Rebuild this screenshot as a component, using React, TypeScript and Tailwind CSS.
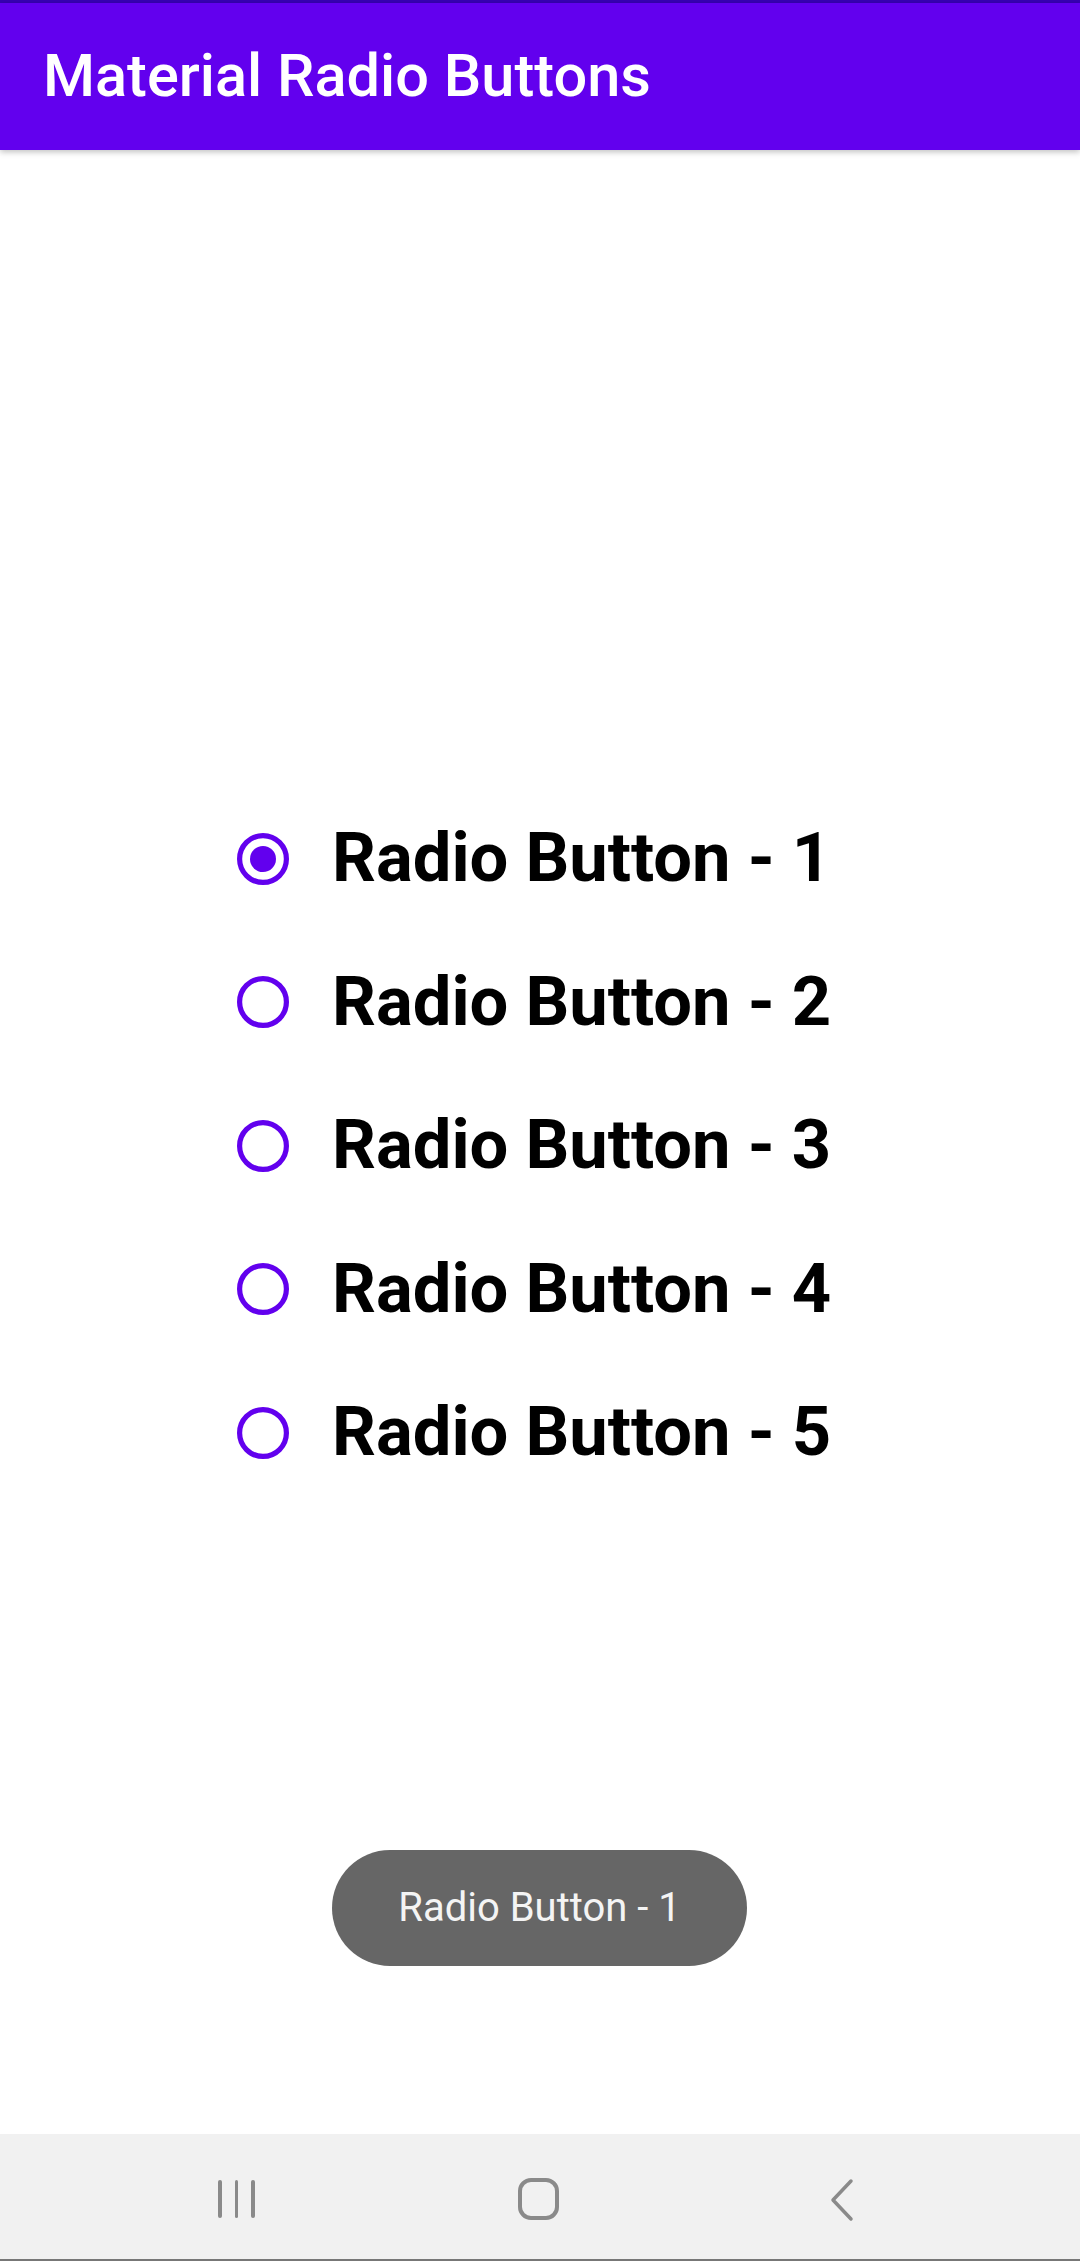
import React from "react";

const labels = ["Radio Button - 1", "Radio Button - 2", "Radio Button - 3", "Radio Button - 4", "Radio Button - 5"];

function Radio({ checked }: { checked: boolean }) {
  return (
    <svg width="52" height="52" viewBox="0 0 52 52">
      <circle cx="26" cy="26" r="23.4" fill="none" stroke="#6200EE" strokeWidth="5.2" />
      {checked && <circle cx="26" cy="26" r="13" fill="#6200EE" />}
    </svg>
  );
}

export default function App() {
  return (
    <div
      className="relative w-[1080px] h-[2261px] bg-white flex flex-col overflow-hidden"
      style={{ fontFamily: "Roboto, 'Noto Sans', sans-serif" }}
    >
      <div className="h-[3px] bg-[#3700B3]" />
      <div className="h-[147px] bg-[#6200EE] flex items-center pl-[43px] shadow-[0_2px_6px_rgba(0,0,0,0.25)] z-10">
        <span className="text-white text-[59.5px] font-medium leading-none">Material Radio Buttons</span>
      </div>
      <div className="flex-1 flex flex-col pt-[637px] pl-[237px]">
        {labels.map((l, i) => (
          <div key={l} className="h-[143.5px] flex items-center">
            <Radio checked={i === 0} />
            <span className="ml-[43px] text-[68.7px] font-bold text-black leading-none">{l}</span>
          </div>
        ))}
      </div>
      <div className="absolute left-[332px] top-[1850px] w-[415px] h-[116px] rounded-full bg-[#666666] flex items-center justify-center">
        <span className="text-[#f4f4f4] text-[40px] leading-none">Radio Button - 1</span>
      </div>
      <div className="h-[127px] bg-[#f1f1f1] flex items-center justify-center relative border-b-2 border-[#777777]">
        <div className="absolute left-[218px] top-[46px] flex gap-[13px]">
          <div className="w-[3.5px] h-[38px] rounded-full bg-[#8a8a8a]" />
          <div className="w-[3.5px] h-[38px] rounded-full bg-[#8a8a8a]" />
          <div className="w-[3.5px] h-[38px] rounded-full bg-[#8a8a8a]" />
        </div>
        <div className="absolute left-[518px] top-[44px] w-[41px] h-[42px] rounded-[13px] border-[4px] border-[#8a8a8a]" />
        <svg className="absolute left-[826px] top-[44px]" width="30" height="44" viewBox="0 0 30 44">
          <path d="M25 3 L7 22 L25 41" fill="none" stroke="#8a8a8a" strokeWidth="3.5" strokeLinecap="round" strokeLinejoin="round" />
        </svg>
      </div>
    </div>
  );
}
